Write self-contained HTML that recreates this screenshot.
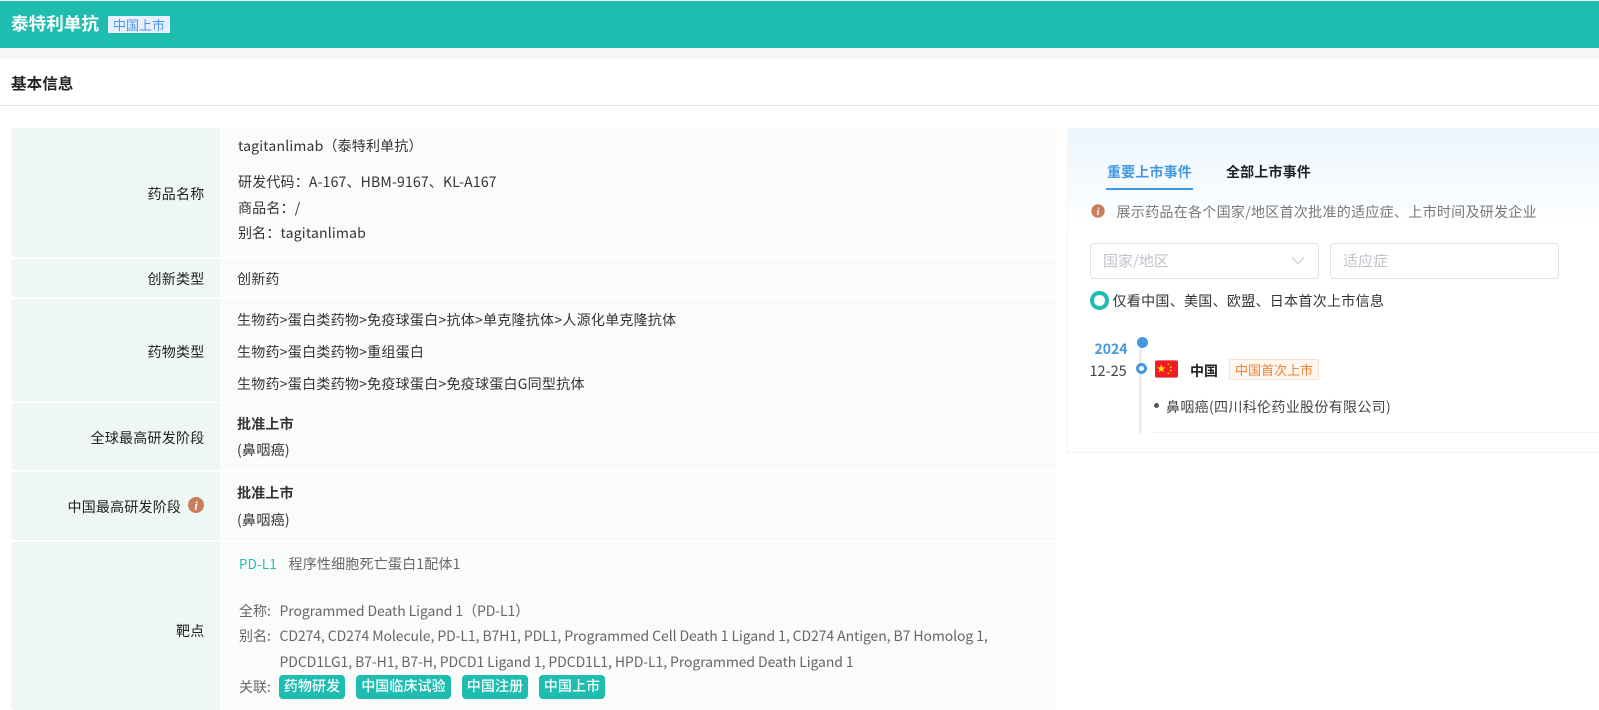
<!DOCTYPE html>
<html lang="zh"><head><meta charset="utf-8"><title>泰特利单抗</title>
<style>
html,body{margin:0;padding:0;background:#fff}
body{width:1599px;height:710px;position:relative;overflow:hidden;font-family:"Noto Sans CJK SC","Liberation Sans",sans-serif;font-size:14px;color:#333}
.a{position:absolute}
.t{position:absolute;white-space:nowrap;line-height:20px}
.l{position:absolute;left:11px;width:209px;background:#eef6f6;border-radius:4px 0 0 4px}
.c{position:absolute;left:221px;width:835px;background:#fafcfc}
.lt{position:absolute;right:1394.5px;white-space:nowrap;line-height:20px;font-size:14px;color:#222;letter-spacing:.25px}
.b{position:absolute;top:675px;height:24px;line-height:23px;background:#1fbdb0;color:#fff;border-radius:4px;text-align:center;font-size:14px;font-weight:500;letter-spacing:.1px}
.g{color:#666;font-size:14px;letter-spacing:-.09px}
.z{letter-spacing:.26px}
</style></head><body>
<div class="a" style="left:0;top:1px;width:1599px;height:47px;background:#1fbdb0"></div>
<div class="a" style="left:0;top:48px;width:1599px;height:11px;background:#f5f6f8"></div>
<div class="t" style="left:11px;top:14px;font-size:17.6px;font-weight:700;color:#fff">泰特利单抗</div>
<div class="t" style="left:108px;top:16px;width:62px;height:17px;line-height:17px;background:#e6f0ff;color:#4d94f0;font-size:13px;text-align:center;border-radius:1px">中国上市</div>
<div class="t" style="left:11px;top:73px;font-size:15.6px;font-weight:700;color:#222">基本信息</div>
<div class="a" style="left:0;top:105px;width:1599px;height:1px;background:#e8e8e8"></div>

<div class="l" style="top:128px;height:129px"></div>
<div class="l" style="top:259px;height:38px"></div>
<div class="l" style="top:299px;height:103px"></div>
<div class="l" style="top:403px;height:67px"></div>
<div class="l" style="top:472px;height:68px"></div>
<div class="l" style="top:542px;height:168px"></div>

<div class="c" style="top:128px;height:34px"></div>
<div class="c" style="top:163px;height:94px"></div>
<div class="c" style="top:259px;height:38px"></div>
<div class="c" style="top:299px;height:103px"></div>
<div class="c" style="top:403px;height:67px"></div>
<div class="c" style="top:472px;height:68px"></div>
<div class="c" style="top:542px;height:42px"></div>
<div class="c" style="top:585px;height:125px"></div>

<div class="lt" style="top:184px">药品名称</div>
<div class="lt" style="top:269px">创新类型</div>
<div class="lt" style="top:342px">药物类型</div>
<div class="lt" style="top:428px">全球最高研发阶段</div>
<div class="t" style="left:67.5px;top:497px;font-size:14px;color:#222;letter-spacing:.2px">中国最高研发阶段</div>
<svg class="a" style="left:188px;top:497px" width="16" height="16" viewBox="0 0 16 16"><circle cx="8" cy="8" r="8" fill="#c97f5c"/><text x="8" y="12.5" font-size="12" font-style="italic" font-weight="700" fill="#fff" text-anchor="middle" font-family="Liberation Serif,serif">i</text></svg>
<div class="lt" style="top:621px">靶点</div>

<div class="t" style="left:238px;top:136px;letter-spacing:.18px">tagitanlimab（泰特利单抗）</div>
<div class="t" style="left:238px;top:172px;letter-spacing:.18px">研发代码：A-167、HBM-9167、KL-A167</div>
<div class="t" style="left:238px;top:198px;letter-spacing:.18px">商品名：/</div>
<div class="t" style="left:238px;top:223px;letter-spacing:.18px">别名：tagitanlimab</div>
<div class="t" style="left:237px;top:269px;letter-spacing:.2px">创新药</div>
<div class="t z" style="left:237px;top:310px">生物药&gt;蛋白类药物&gt;免疫球蛋白&gt;抗体&gt;单克隆抗体&gt;人源化单克隆抗体</div>
<div class="t z" style="left:237px;top:342px">生物药&gt;蛋白类药物&gt;重组蛋白</div>
<div class="t z" style="left:237px;top:374px">生物药&gt;蛋白类药物&gt;免疫球蛋白&gt;免疫球蛋白G同型抗体</div>
<div class="t" style="left:237px;top:414px;font-weight:700;letter-spacing:.2px">批准上市</div>
<div class="t" style="left:237px;top:440px;letter-spacing:.3px">(鼻咽癌)</div>
<div class="t" style="left:237px;top:483px;font-weight:700;letter-spacing:.2px">批准上市</div>
<div class="t" style="left:237px;top:510px;letter-spacing:.3px">(鼻咽癌)</div>
<div class="t" style="left:239px;top:554px;font-size:13.2px;color:#1fbdb0;letter-spacing:.3px">PD-L1</div>
<div class="t" style="left:288.5px;top:554px;color:#666;letter-spacing:.2px">程序性细胞死亡蛋白1配体1</div>
<div class="t" style="left:239px;top:601px;color:#666">全称:</div>
<div class="t g" style="left:279.5px;top:601px">Programmed Death Ligand 1（PD-L1）</div>
<div class="t" style="left:239px;top:626px;color:#666">别名:</div>
<div class="t g" style="left:279.5px;top:626px">CD274, CD274 Molecule, PD-L1, B7H1, PDL1, Programmed Cell Death 1 Ligand 1, CD274 Antigen, B7 Homolog 1,</div>
<div class="t g" style="left:279.5px;top:652px">PDCD1LG1, B7-H1, B7-H, PDCD1 Ligand 1, PDCD1L1, HPD-L1, Programmed Death Ligand 1</div>
<div class="t" style="left:239px;top:677px;color:#666">关联:</div>
<div class="b" style="left:279px;width:66px">药物研发</div>
<div class="b" style="left:356px;width:95px">中国临床试验</div>
<div class="b" style="left:462px;width:66px">中国注册</div>
<div class="b" style="left:539px;width:66px">中国上市</div>

<div class="a" style="left:1067px;top:128px;width:532px;height:325px;box-sizing:border-box;border:1px solid #f1f3f5;border-right:0;background:linear-gradient(180deg,#ecf6fe 0,#fff 100px);border-radius:4px 0 0 0"></div>
<div class="t" style="left:1107px;top:162px;font-weight:700;color:#4498e0;letter-spacing:.15px">重要上市事件</div>
<div class="a" style="left:1106px;top:188px;width:87px;height:2px;background:#4498e0"></div>
<div class="t" style="left:1226px;top:162px;font-weight:700;color:#222;letter-spacing:.15px">全部上市事件</div>
<svg class="a" style="left:1090.5px;top:204px" width="14" height="14" viewBox="0 0 14 14"><circle cx="7" cy="7" r="6.7" fill="#c97f5c"/><text x="7" y="11" font-size="10" font-style="italic" font-weight="700" fill="#fff" text-anchor="middle" font-family="Liberation Serif,serif">i</text></svg>
<div class="t" style="left:1116.5px;top:202px;letter-spacing:.3px;color:#777">展示药品在各个国家/地区首次批准的适应症、上市时间及研发企业</div>
<div class="a" style="left:1090px;top:243px;width:229px;height:36px;box-sizing:border-box;border:1px solid #dfe2e8;border-radius:4px;background:#fff"></div>
<div class="t" style="left:1103px;top:251px;font-size:15px;color:#bfc3ca">国家/地区</div>
<svg class="a" style="left:1290px;top:255px" width="16" height="12" viewBox="0 0 16 12"><path d="M2 2.5l6 6 6-6" fill="none" stroke="#c4c8ce" stroke-width="1"/></svg>
<div class="a" style="left:1330px;top:243px;width:229px;height:36px;box-sizing:border-box;border:1px solid #dfe2e8;border-radius:4px;background:#fff"></div>
<div class="t" style="left:1343px;top:251px;font-size:15px;color:#bfc3ca">适应症</div>
<div class="a" style="left:1090px;top:291px;width:18.5px;height:18.5px;box-sizing:border-box;border:4px solid #1fbdb0;border-radius:50%;background:#fff"></div>
<div class="t" style="left:1112.5px;top:291px;letter-spacing:.3px;color:#333">仅看中国、美国、欧盟、日本首次上市信息</div>

<div class="a" style="left:1139px;top:342px;width:3px;height:91px;background:#e9eef5"></div>
<div class="a" style="left:1137px;top:336.5px;width:11px;height:11px;border-radius:50%;background:#4498e0"></div>
<div class="a" style="left:1136px;top:362.5px;width:11px;height:11px;box-sizing:border-box;border:3px solid #4498e0;border-radius:50%;background:#fff"></div>
<div class="t" style="left:1094.5px;top:339px;font-weight:700;color:#4498e0">2024</div>
<div class="t" style="left:1089.5px;top:361px;font-size:14.5px;color:#444">12-25</div>
<svg class="a" style="left:1155px;top:360px" width="23" height="18" viewBox="0 0 24 18"><rect width="24" height="18" rx="2" fill="#ee1c25"/><polygon points="6.5,4 7.6,7.3 11,7.3 8.3,9.3 9.3,12.6 6.5,10.6 3.7,12.6 4.7,9.3 2,7.3 5.4,7.3" fill="#ffde00"/><circle cx="14" cy="4" r=".9" fill="#ffde00"/><circle cx="16.5" cy="7" r=".9" fill="#ffde00"/><circle cx="16.5" cy="10.5" r=".9" fill="#ffde00"/><circle cx="14" cy="13.5" r=".9" fill="#ffde00"/></svg>
<div class="t" style="left:1190px;top:361px;font-weight:700;color:#222">中国</div>
<div class="t" style="left:1229px;top:359px;width:90px;height:21px;line-height:19px;box-sizing:border-box;border:1px solid #fbe0cc;border-radius:2px;background:#fff7f0;color:#f58233;font-size:13px;text-align:center">中国首次上市</div>
<div class="a" style="left:1154px;top:402.5px;width:5px;height:5px;border-radius:50%;background:#555"></div>
<div class="t" style="left:1166px;top:397px;letter-spacing:.33px;color:#444">鼻咽癌(四川科伦药业股份有限公司)</div>
<div class="a" style="left:1154px;top:432px;width:445px;height:1px;background:#eceff3"></div>
</body></html>
